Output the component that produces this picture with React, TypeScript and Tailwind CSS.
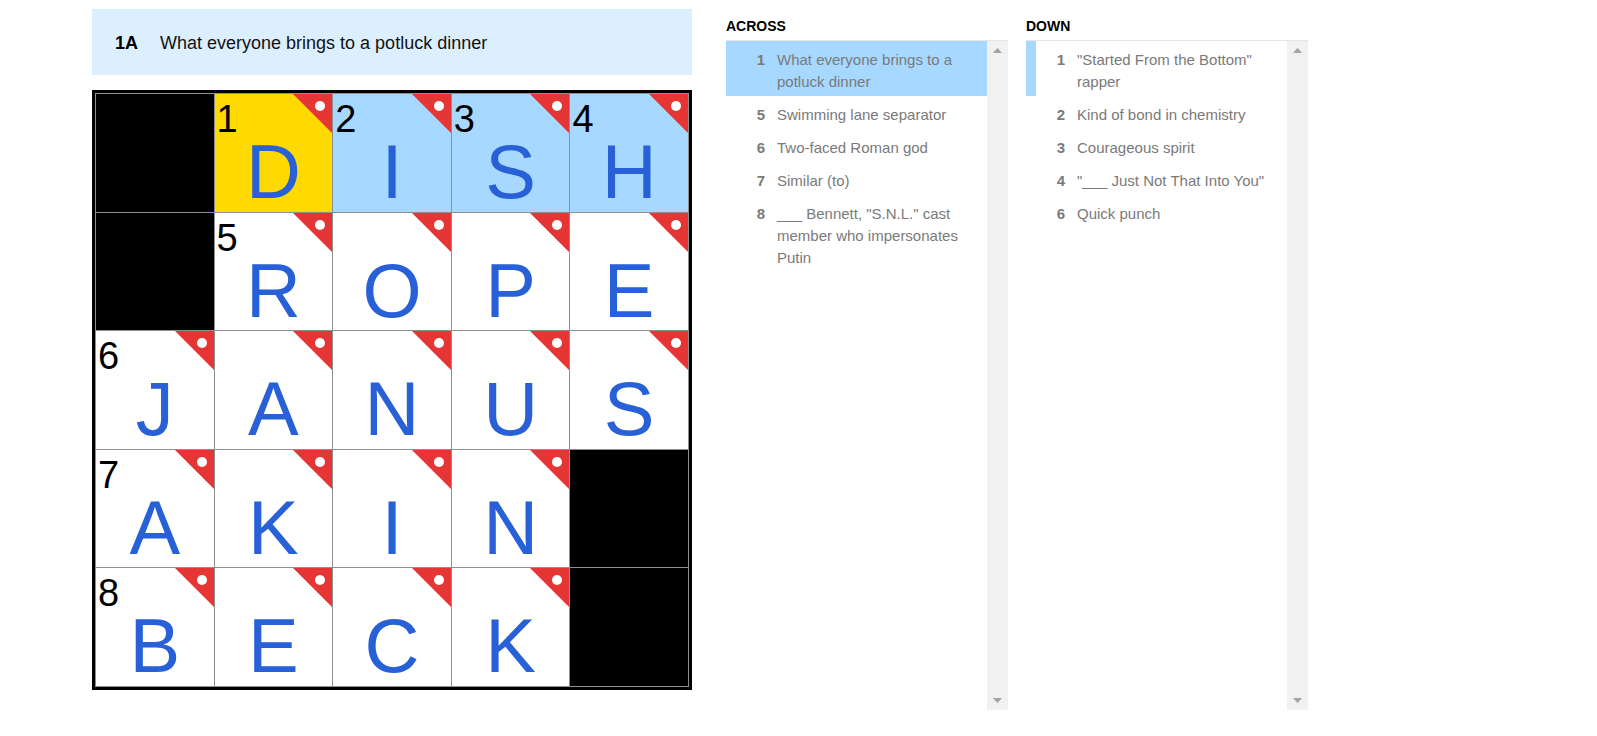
import React from "react";

type Cell = { letter?: string; num?: number; state?: "active" | "word" };

const GRID: Cell[][] = [
  [{}, { letter: "D", num: 1, state: "active" }, { letter: "I", num: 2, state: "word" }, { letter: "S", num: 3, state: "word" }, { letter: "H", num: 4, state: "word" }],
  [{}, { letter: "R", num: 5 }, { letter: "O" }, { letter: "P" }, { letter: "E" }],
  [{ letter: "J", num: 6 }, { letter: "A" }, { letter: "N" }, { letter: "U" }, { letter: "S" }],
  [{ letter: "A", num: 7 }, { letter: "K" }, { letter: "I" }, { letter: "N" }, {}],
  [{ letter: "B", num: 8 }, { letter: "E" }, { letter: "C" }, { letter: "K" }, {}],
];

const ACROSS = [
  { n: 1, text: "What everyone brings to a potluck dinner" },
  { n: 5, text: "Swimming lane separator" },
  { n: 6, text: "Two-faced Roman god" },
  { n: 7, text: "Similar (to)" },
  { n: 8, text: '___ Bennett, "S.N.L." cast member who impersonates Putin' },
];

const DOWN = [
  { n: 1, text: '"Started From the Bottom" rapper' },
  { n: 2, text: "Kind of bond in chemistry" },
  { n: 3, text: "Courageous spirit" },
  { n: 4, text: '"___ Just Not That Into You"' },
  { n: 6, text: "Quick punch" },
];

export default function App() {
  return (
    <div className="min-h-[736px] w-full bg-white font-['Liberation_Sans',Arial,sans-serif]">
      <div className="flex pl-[92px] pt-[9px]">
        {/* Board */}
        <div className="w-[600px] shrink-0">
          <div className="flex h-[66px] items-center bg-[#dcefff] pl-[23px] pt-[2px] text-[18px] text-[#121212]">
            <span className="w-[45px] shrink-0 font-bold text-black">1A</span>
            <span>What everyone brings to a potluck dinner</span>
          </div>
          <div className="mt-[15px] border-[3px] border-black">
            <div className="grid h-[594px] grid-cols-5 grid-rows-5 gap-px bg-[#8f8f8f] p-px">
              {GRID.flat().map((c, i) => (
                <GridCell key={i} cell={c} />
              ))}
            </div>
          </div>
        </div>

        {/* Clue lists */}
        <div className="ml-[34px] flex gap-[18px] pt-[7px]">
          <ClueList title="ACROSS" clues={ACROSS} mode="full" />
          <ClueList title="DOWN" clues={DOWN} mode="bar" />
        </div>
      </div>
    </div>
  );
}

function GridCell({ cell }: { cell: Cell }) {
  if (!cell.letter) return <div className="bg-black" />;
  const bg = cell.state === "active" ? "bg-[#ffda00]" : cell.state === "word" ? "bg-[#a7d8ff]" : "bg-white";
  return (
    <div className={`relative ${bg}`}>
      {cell.num && (
        <span className="absolute left-[2px] top-[6px] text-[38px] leading-none text-black">{cell.num}</span>
      )}
      <svg className="absolute right-0 top-0" width="39" height="39" viewBox="0 0 39 39">
        <polygon points="0,0 39,0 39,39" fill="#e63535" />
        <circle cx="27" cy="12" r="5" fill="#fff" />
      </svg>
      <div className="pt-[48px] text-center text-[76px] leading-[0.8] text-[#2860d8]">{cell.letter}</div>
    </div>
  );
}

function ClueList({
  title,
  clues,
  mode,
}: {
  title: string;
  clues: { n: number; text: string }[];
  mode: "full" | "bar";
}) {
  return (
    <div className="w-[282px]">
      <h3 className="mb-[4px] h-[20px] text-[14px] font-bold leading-[20px] text-black">{title}</h3>
      <div className="flex h-[670px] border-t border-[#e6e6e6]">
        <ol className="flex-1">
          {clues.map((c, i) => {
            const first = i === 0;
            return (
              <li
                key={c.n}
                className={`relative flex pb-[3px] pt-[8px] text-[15px] leading-[22px] text-[#7a7a7a] ${
                  first && mode === "full" ? "bg-[#a7d8ff]" : ""
                }`}
              >
                {first && mode === "bar" && <span className="absolute bottom-0 left-0 top-0 w-[10px] bg-[#a7d8ff]" />}
                <span className="w-[39px] shrink-0 text-right font-bold">{c.n}</span>
                <span className="ml-[12px] pr-[18px]">{c.text}</span>
              </li>
            );
          })}
        </ol>
        <div className="flex w-[21px] flex-col items-center justify-between bg-[#f1f1f1] pb-[7px] pt-[7px]">
          <svg width="9" height="5" viewBox="0 0 9 5">
            <polygon points="0,5 4.5,0 9,5" fill="#a3a3a3" />
          </svg>
          <svg width="9" height="5" viewBox="0 0 9 5">
            <polygon points="0,0 9,0 4.5,5" fill="#a3a3a3" />
          </svg>
        </div>
      </div>
    </div>
  );
}
